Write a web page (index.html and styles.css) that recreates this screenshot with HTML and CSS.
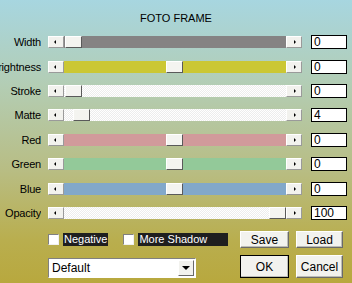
FILE: index.html
```html
<!DOCTYPE html>
<html lang="en">
<head>
    <meta charset="UTF-8">
    <title>Foto Frame</title>
    <link rel="stylesheet" href="styles.css">
</head>
<body>
    <div class="dialog">
        <div class="title">FOTO FRAME</div>

        <div class="rows">
            <div class="row">
                <span class="label">Width</span>
                <div class="scroll">
                    <span class="arrow left"></span>
                    <div class="track gray"><span class="thumb" style="left: 1px"></span></div>
                    <span class="arrow right"></span>
                </div>
                <div class="value">0</div>
            </div>
            <div class="row">
                <span class="label">Brightness</span>
                <div class="scroll">
                    <span class="arrow left"></span>
                    <div class="track yellow"><span class="thumb" style="left: 102px"></span></div>
                    <span class="arrow right"></span>
                </div>
                <div class="value">0</div>
            </div>
            <div class="row">
                <span class="label">Stroke</span>
                <div class="scroll">
                    <span class="arrow left"></span>
                    <div class="track white"><span class="thumb" style="left: 1px"></span></div>
                    <span class="arrow right"></span>
                </div>
                <div class="value">0</div>
            </div>
            <div class="row">
                <span class="label">Matte</span>
                <div class="scroll">
                    <span class="arrow left"></span>
                    <div class="track white"><span class="thumb" style="left: 9px"></span></div>
                    <span class="arrow right"></span>
                </div>
                <div class="value">4</div>
            </div>
            <div class="row">
                <span class="label">Red</span>
                <div class="scroll">
                    <span class="arrow left"></span>
                    <div class="track red"><span class="thumb" style="left: 102px"></span></div>
                    <span class="arrow right"></span>
                </div>
                <div class="value">0</div>
            </div>
            <div class="row">
                <span class="label">Green</span>
                <div class="scroll">
                    <span class="arrow left"></span>
                    <div class="track green"><span class="thumb" style="left: 102px"></span></div>
                    <span class="arrow right"></span>
                </div>
                <div class="value">0</div>
            </div>
            <div class="row">
                <span class="label">Blue</span>
                <div class="scroll">
                    <span class="arrow left"></span>
                    <div class="track blue"><span class="thumb" style="left: 102px"></span></div>
                    <span class="arrow right"></span>
                </div>
                <div class="value">0</div>
            </div>
            <div class="row">
                <span class="label">Opacity</span>
                <div class="scroll">
                    <span class="arrow left"></span>
                    <div class="track white"><span class="thumb" style="left: 205px"></span></div>
                    <span class="arrow right"></span>
                </div>
                <div class="value">100</div>
            </div>
        </div>

        <div class="bottom">
            <div class="line top-line">
                <div class="left-part checks">
                    <span class="check"></span>
                    <span class="check-label">Negative</span>
                    <span class="check second"></span>
                    <span class="check-label wide">More Shadow</span>
                </div>
                <button class="btn">Save</button>
                <button class="btn">Load</button>
            </div>
            <div class="line">
                <div class="left-part">
                    <div class="select">
                        <span class="select-text">Default</span>
                        <span class="select-btn"></span>
                    </div>
                </div>
                <button class="btn default">OK</button>
                <button class="btn">Cancel</button>
            </div>
        </div>
    </div>
</body>
</html>
```

FILE: styles.css
```css
body {
    margin: 0;
    font-family: "Liberation Sans", Arial, sans-serif;
    font-size: 11px;
    color: #000;
}

.dialog {
    width: 352px;
    height: 283px;
    overflow: hidden;
    background: linear-gradient(180deg, #a7d6e0 0%, #b3cdb4 30%, #b8bd84 60%, #b9ae4e 85%, #b8a83e 100%);
}

.title {
    text-align: center;
    padding-top: 12px;
    height: 18px;
    line-height: 13px;
}

.rows {
    display: grid;
    grid-auto-rows: 24.4px;
}

.row {
    display: flex;
    align-items: center;
}

.label {
    width: 41px;
    flex: none;
    text-align: right;
    white-space: nowrap;
    direction: rtl;
    overflow: hidden;
    margin-right: 7px;
    letter-spacing: -0.2px;
}

.scroll {
    display: flex;
    width: 254px;
    height: 12px;
}

.arrow {
    width: 16px;
    height: 12px;
    box-sizing: border-box;
    background: #f2f2ee;
    border-top: 1px solid #fff;
    border-left: 1px solid #fff;
    border-right: 1px solid #9a9a9a;
    border-bottom: 1px solid #9a9a9a;
    position: relative;
}

.arrow::after {
    content: "";
    position: absolute;
    top: 3px;
    border-top: 2px solid transparent;
    border-bottom: 2px solid transparent;
}

.arrow.left::after {
    left: 5px;
    border-right: 2px solid #000;
}

.arrow.right::after {
    left: 7px;
    border-left: 2px solid #000;
}

.track {
    flex: 1;
    position: relative;
}

.track.gray { background: #858383; }
.track.yellow { background: #cbc734; }
.track.red { background: #d19a9b; }
.track.green { background: #93c999; }
.track.blue { background: #82a8ca; }
.track.white {
    background: repeating-conic-gradient(#ffffff 0 25%, #ededed 0 50%) 0 0 / 2px 2px;
}

.thumb {
    position: absolute;
    top: 0;
    width: 17px;
    height: 12px;
    box-sizing: border-box;
    background: #f4f4f0;
    border-top: 1px solid #fff;
    border-left: 1px solid #fff;
    border-right: 1px solid #5a5a5a;
    border-bottom: 1px solid #5a5a5a;
}

.value {
    margin-left: 9px;
    width: 36px;
    height: 14px;
    box-sizing: border-box;
    background: #fff;
    border: 1px solid #000;
    padding-left: 2px;
    line-height: 12px;
    font-size: 12px;
}

.bottom {
    display: flex;
    flex-direction: column;
    gap: 7px;
    padding-left: 48px;
    margin-top: 6px;
}

.line {
    display: flex;
    height: 23px;
    gap: 7px;
}

.line.top-line {
    height: 17px;
}

.left-part {
    width: 185px;
    flex: none;
    display: flex;
    align-items: flex-end;
}

.checks {
    align-items: center;
}

.check {
    width: 11px;
    height: 11px;
    flex: none;
    box-sizing: border-box;
    background: #fff;
    border-top: 1px solid #808080;
    border-left: 1px solid #808080;
    border-right: 1px solid #f0f0f0;
    border-bottom: 1px solid #f0f0f0;
}

.check.second {
    margin-left: 15px;
}

.check-label {
    margin-left: 4px;
    background: #1f1f1f;
    color: #fff;
    height: 13px;
    line-height: 13px;
    padding: 0 1px;
    white-space: nowrap;
}

.check-label.wide {
    width: 90px;
    flex: none;
    box-sizing: border-box;
}

.btn {
    width: 49px;
    flex: none;
    font-family: "Liberation Sans", Arial, sans-serif;
    font-size: 12px;
    margin: 0;
    padding: 0;
    background: #f2f2ee;
    border-top: 1px solid #fff;
    border-left: 1px solid #fff;
    border-right: 1px solid #6a6a6a;
    border-bottom: 1px solid #6a6a6a;
    box-shadow: inset -1px -1px 0 #bdbdb5;
    color: #000;
}

.btn + .btn {
    width: 47px;
}

.btn.default {
    outline: 1px solid #000;
    outline-offset: -1px;
}

.select {
    width: 148px;
    height: 20px;
    box-sizing: border-box;
    background: #fff;
    border-top: 1px solid #808080;
    border-left: 1px solid #808080;
    border-right: 1px solid #fff;
    border-bottom: 1px solid #fff;
    display: flex;
    align-items: center;
}

.select-text {
    flex: 1;
    padding-left: 3px;
    font-size: 12px;
}

.select-btn {
    width: 16px;
    height: 16px;
    margin-right: 1px;
    box-sizing: border-box;
    background: #f2f2ee;
    border-top: 1px solid #fff;
    border-left: 1px solid #fff;
    border-right: 1px solid #6a6a6a;
    border-bottom: 1px solid #6a6a6a;
    position: relative;
}

.select-btn::after {
    content: "";
    position: absolute;
    left: 3px;
    top: 5px;
    border-left: 4px solid transparent;
    border-right: 4px solid transparent;
    border-top: 4px solid #000;
}
```
